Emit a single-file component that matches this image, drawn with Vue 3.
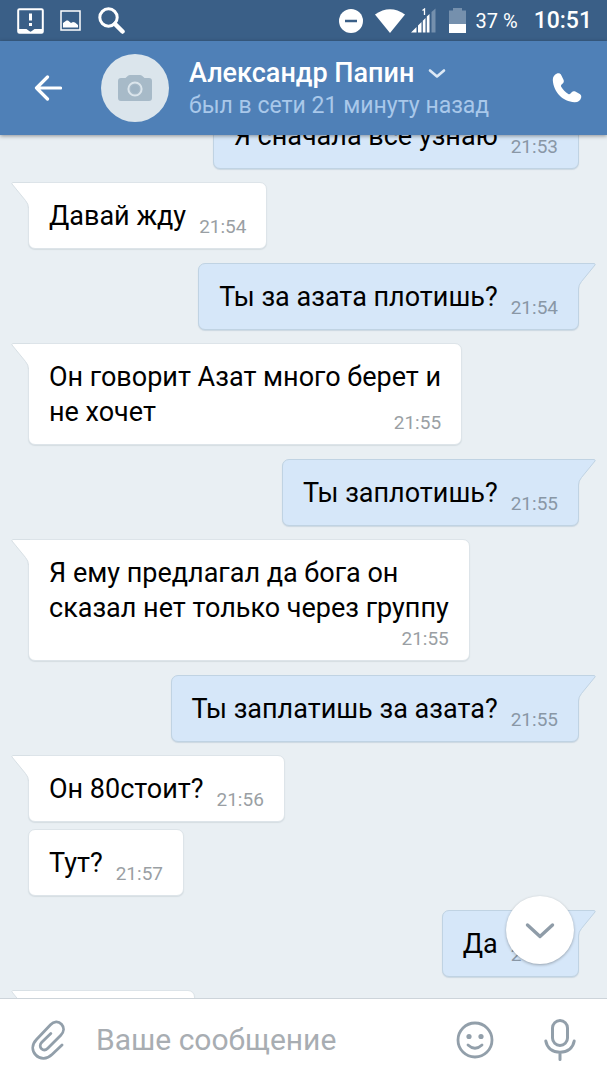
<script setup>
import {ref, onMounted} from 'vue'

const draft = ref('')
const chat = ref(null)

// time: 'side' next to the text, 'tuck' on the last line, 'below' under the text
const messages = [
  {id: 1, out: true, text: 'Я сначала все узнаю', time: '21:53', place: 'side'},
  {id: 2, tail: true, text: 'Давай жду', time: '21:54', place: 'side'},
  {id: 3, out: true, tail: true, text: 'Ты за азата плотишь?', time: '21:54', place: 'side'},
  {id: 4, tail: true, text: 'Он говорит Азат много берет и\nне хочет', time: '21:55', place: 'tuck'},
  {id: 5, out: true, tail: true, text: 'Ты заплотишь?', time: '21:55', place: 'side'},
  {id: 6, tail: true, text: 'Я ему предлагал да бога он\nсказал нет только через группу', time: '21:55', place: 'below'},
  {id: 7, out: true, tail: true, text: 'Ты заплатишь за азата?', time: '21:55', place: 'side'},
  {id: 8, tail: true, text: 'Он 80стоит?', time: '21:56', place: 'side'},
  {id: 9, text: 'Тут?', time: '21:57', place: 'side'},
  {id: 10, out: true, tail: true, text: 'Да', time: '21:57', place: 'side'},
  {id: 11, tail: true, text: '', time: '', place: 'empty'},
]

onMounted(() => {
  chat.value.scrollTop = 47
})

function scrollDown() {
  chat.value.scrollTop = chat.value.scrollHeight
}
</script>

<template>
  <div class="screen">
    <div class="status">
      <svg width="27" height="26" viewBox="0 0 27 26">
        <path d="M2.500 1.200H24.500Q25.800 1.200 25.800 2.500V23.500Q25.800 24.800 24.500 24.800H2.500Q1.200 24.800 1.200 23.500V2.500Q1.200 1.200 2.500 1.200Z" fill="none" stroke="#fff" stroke-width="2" />
        <path d="M1 21H9.500L13.500 24L17.500 21H26V25H1Z" fill="#fff" />
        <path d="M12 5.500H15V12.500H12ZM12 15H15V18H12Z" fill="#fff" />
      </svg>
      <svg class="gap-picture" width="21" height="21" viewBox="0 0 21 21">
        <rect x="1" y="1" width="19" height="19" fill="none" stroke="#fff" stroke-width="1.500" />
        <path d="M3 17.500V13L6.500 10.500L8 10.500L11 13L13 12L15 12.500L18 15V17.500Z" fill="#fff" />
      </svg>
      <svg class="gap-search" width="28" height="28" viewBox="0 0 28 28">
        <circle cx="11.500" cy="10.500" r="8.700" fill="none" stroke="#fff" stroke-width="3" />
        <path d="M18 17L25.500 24.500" stroke="#fff" stroke-width="4.500" stroke-linecap="round" />
      </svg>
      <div class="system">
        <svg width="24" height="24" viewBox="0 0 24 24">
          <circle cx="12" cy="12" r="12" fill="#fff" />
          <path d="M6 12H18" stroke="#3a5f87" stroke-width="2.500" />
        </svg>
        <svg class="gap-wifi" width="30" height="24" viewBox="0 0 30 24">
          <path d="M0 5.500Q15 -5 30 5.500L15 24Z" fill="#fff" />
        </svg>
        <svg class="gap-signal" width="25" height="26" viewBox="0 0 25 26">
          <path d="M0 24.500L5.500 19V24.500ZM7 17.500L10.500 14V24.500H7ZM11.800 12.700L14.500 10V24.500H11.800ZM15.800 8.500L18.500 6V24.500H15.800Z" fill="#fff" />
          <path d="M20.500 4L24.500 0.500V24.500H20.500Z" fill="#7590ad" />
          <path d="M11.500 2.500L13.500 1V7" fill="none" stroke="#fff" stroke-width="1.300" />
        </svg>
        <svg class="gap-battery" width="17" height="26" viewBox="0 0 17 26">
          <path d="M4 0H13V2.500H17V16H0V2.500H4Z" fill="#7590ad" />
          <path d="M0 16H17V25H0Z" fill="#fff" />
        </svg>
        <span class="percent">37 %</span>
        <span class="clock">10:51</span>
      </div>
    </div>

    <header class="header">
      <button class="icon-button back" aria-label="Назад">
        <svg width="28" height="26" viewBox="0 0 28 26">
          <path d="M13.500 2L2.500 13L13.500 24M2.500 13H26.500" fill="none" stroke="#fff" stroke-width="3.200" stroke-linecap="round" stroke-linejoin="round" />
        </svg>
      </button>
      <div class="avatar">
        <svg width="34" height="27" viewBox="0 0 34 27">
          <path d="M3 3H7.500L10 0.800Q10.800 0 12 0H22Q23.200 0 24 0.800L26.500 3H31Q34 3 34 6V23Q34 26 31 26H3Q0 26 0 23V6Q0 3 3 3Z" fill="#a7bac8" />
          <circle cx="17" cy="14" r="6.600" fill="none" stroke="#dbe5ec" stroke-width="2" />
          <circle cx="17" cy="14" r="4.200" fill="#9fb4c4" />
        </svg>
      </div>
      <button class="person">
        <span class="name">Александр Папин
          <svg width="18" height="11" viewBox="0 0 18 11">
            <path d="M2 2.500L9 8.500L16 2.500" fill="none" stroke="#dce8f5" stroke-width="2.600" stroke-linecap="round" stroke-linejoin="round" />
          </svg>
        </span>
        <span class="seen">был в сети 21 минуту назад</span>
      </button>
      <button class="icon-button call" aria-label="Позвонить">
        <svg width="30" height="30" viewBox="0 0 30 30">
          <path d="M5 0.600C2.500 1.500 0.700 4 0.800 7C1.500 19 11 28.800 22.500 29.200C26 29.300 28.500 27.500 29.200 24.500C29.500 23 29 21.800 27.800 21L23.300 18.600C22 18 20.600 18.200 19.700 19.200L18.500 20.600C17.900 21.200 17 21.300 16.300 20.900C13.300 19.200 10.800 16.600 9.200 13.700C8.800 13 9 12.200 9.600 11.600L11 10.200C11.900 9.300 12.100 8 11.500 6.800L9.300 2.200C8.500 0.600 6.700 0 5 0.600Z" fill="#fff" />
        </svg>
      </button>
    </header>

    <main class="body">
      <div ref="chat" class="chat">
        <div
          v-for="message in messages"
          :key="message.id"
          class="bubble"
          :class="[message.out ? 'out' : 'in', message.place, {tailed: message.tail}]"
        >
          <svg v-if="message.tail" class="tail" width="19" height="26" viewBox="0 0 19 26">
            <path class="tail-fill" d="M19 0.500H1.500Q0.500 0.800 1 2L14.500 18.500Q17.500 22 17.500 26H19Z" />
            <path class="tail-line" d="M19 0.500H1.500Q0.500 0.800 1 2L14.500 18.500Q17.500 22 17.500 26" />
          </svg>
          <span class="text">{{ message.text }}</span>
          <time class="time">{{ message.time }}</time>
        </div>
      </div>
      <button class="down" aria-label="Вниз" @click="scrollDown">
        <svg width="30" height="18" viewBox="0 0 30 18">
          <path d="M2.500 4L15 15.500L27.500 4" fill="none" stroke="#8f9ca8" stroke-width="3.400" stroke-linecap="round" stroke-linejoin="round" />
        </svg>
      </button>
    </main>

    <form class="composer" @submit.prevent>
      <button type="button" class="icon-button" aria-label="Прикрепить">
        <svg width="34" height="40" viewBox="0 0 34 40">
          <path d="M31 25L21 34.500C16 39.500 9 39.500 4.800 35C0.600 30.500 0.800 24.500 5.500 19.500L19.500 4.800C22.800 1.200 27.500 1 30.500 4.200C33.500 7.500 33 12 29.800 15.300L16.800 28.300C14.800 30.300 12.300 30.500 10.500 28.800C8.700 27 8.900 24.300 10.800 22.300L19.800 13.500" fill="none" stroke="#929faa" stroke-width="2.800" stroke-linecap="round" />
        </svg>
      </button>
      <input v-model="draft" type="text" placeholder="Ваше сообщение" aria-label="Ваше сообщение">
      <button type="button" class="icon-button" aria-label="Смайлы">
        <svg width="38" height="38" viewBox="0 0 38 38">
          <circle cx="19" cy="19" r="17" fill="none" stroke="#929faa" stroke-width="2.800" />
          <circle cx="13" cy="15.500" r="2.600" fill="#929faa" />
          <circle cx="25" cy="15.500" r="2.600" fill="#929faa" />
          <path d="M12 24Q19 30.500 26 24" fill="none" stroke="#929faa" stroke-width="2.800" stroke-linecap="round" />
        </svg>
      </button>
      <button type="button" class="icon-button mic" aria-label="Голосовое сообщение">
        <svg width="32" height="42" viewBox="0 0 32 42">
          <rect x="8.500" y="1.500" width="15" height="25" rx="7.500" fill="none" stroke="#929faa" stroke-width="3" />
          <path d="M1.800 22C3 29 8.500 33.200 16 33.200S29 29 30.200 22M16 33.500V40.500" fill="none" stroke="#929faa" stroke-width="3" stroke-linecap="round" />
        </svg>
      </button>
    </form>
  </div>
</template>

<style>
body {
  margin: 0;
}
</style>

<style scoped>
.screen {
  display: flex;
  flex-direction: column;
  height: 100vh;
  font-family: Roboto, "Noto Sans", sans-serif;
  background: #e9eff3;
}

button {
  padding: 0;
  border: 0;
  background: none;
  font: inherit;
  cursor: pointer;
}

svg {
  display: block;
  flex: none;
}

.status {
  display: flex;
  align-items: center;
  height: 41px;
  padding: 0 15px 0 17px;
  box-sizing: border-box;
  background: #3a5f87;
  color: #fff;
}

.gap-picture {
  margin-left: 16px;
}

.gap-search {
  margin-left: 16px;
}

.system {
  display: flex;
  align-items: center;
  margin-left: auto;
}

.gap-wifi {
  margin-left: 12px;
}

.gap-signal {
  margin-left: 6px;
}

.gap-battery {
  margin-left: 13px;
}

.percent {
  margin-left: 10px;
  font-size: 20px;
}

.clock {
  margin-left: 16px;
  font-size: 23px;
  font-weight: 500;
}

.header {
  position: relative;
  z-index: 2;
  display: flex;
  align-items: center;
  height: 94px;
  padding: 0 25px 0 34px;
  background: #4f80b7;
  box-shadow: 0 1px 4px rgba(0, 0, 0, 0.4);
}

.avatar {
  display: flex;
  align-items: center;
  justify-content: center;
  width: 68px;
  height: 68px;
  margin: 0 20px 0 39px;
  border-radius: 50%;
  background: #dbe5ec;
}

.person {
  display: flex;
  flex-direction: column;
  align-items: flex-start;
  padding-top: 2px;
  white-space: nowrap;
}

.name {
  display: flex;
  align-items: center;
  gap: 14px;
  font-size: 27px;
  line-height: 33px;
  font-weight: 500;
  color: #fff;
}

.seen {
  font-size: 23px;
  line-height: 32px;
  color: #a9c8ea;
}

.call {
  margin-left: auto;
}

.body {
  position: relative;
  flex: 1;
  min-height: 0;
}

.chat {
  display: flex;
  flex-direction: column;
  align-items: flex-start;
  height: 100%;
  padding: 14px 28px;
  box-sizing: border-box;
  overflow-y: auto;
  scrollbar-width: none;
}

.bubble {
  position: relative;
  display: flex;
  flex: none;
  align-items: flex-end;
  gap: 13px;
  padding: 16px 20px 11px;
  border: 1px solid #dde4e9;
  border-radius: 7px;
}

.in {
  background: #fff;
  box-shadow: 0 1px 1px #d5dde2;
}

.out {
  align-self: flex-end;
  border-color: #c0d3e3;
  background: #d6e7f9;
  box-shadow: 0 1px 1px #cbd7e1;
}

.in + .in {
  margin-top: 7px;
}

.out + .in {
  margin-top: 13px;
}

.in + .out {
  margin-top: 14px;
}

.tuck {
  display: flow-root;
}

.tuck .time {
  float: right;
  margin-top: 18px;
}

.below {
  flex-direction: column;
  gap: 0;
}

.empty {
  width: 125px;
  height: 38px;
}

.in.tailed {
  border-top-left-radius: 0;
}

.out.tailed {
  border-top-right-radius: 0;
}

.tail {
  position: absolute;
  top: -1px;
  left: -18px;
}

.out .tail {
  left: auto;
  right: -18px;
  transform: scaleX(-1);
}

.tail-fill {
  fill: #fff;
}

.tail-line {
  fill: none;
  stroke: #d8e0e5;
}

.out .tail-fill {
  fill: #d6e7f9;
}

.out .tail-line {
  stroke: #c0d3e3;
}

.text {
  align-self: flex-start;
  margin-bottom: 3px;
  font-size: 27px;
  line-height: 35px;
  white-space: pre;
  color: #000;
}

.time {
  font-size: 19px;
  line-height: 20px;
  color: #9a9fa4;
}

.out .time {
  color: #8997a6;
}

.down {
  position: absolute;
  right: 33px;
  bottom: 34px;
  display: flex;
  align-items: center;
  justify-content: center;
  width: 68px;
  height: 68px;
  border-radius: 50%;
  background: #fff;
  box-shadow: 0 1px 3px rgba(0, 0, 0, 0.3);
}

.composer {
  display: flex;
  align-items: center;
  height: 82px;
  padding: 0 31px;
  box-sizing: border-box;
  border-top: 1px solid #cdd4da;
  background: #fff;
}

.composer input {
  flex: 1;
  min-width: 0;
  margin: 0 20px 0 31px;
  padding: 0;
  border: 0;
  outline: 0;
  font: inherit;
  font-size: 30px;
  color: #000;
}

.composer input::placeholder {
  color: #a8adb2;
  opacity: 1;
}

.mic {
  margin-left: 50px;
}
</style>
